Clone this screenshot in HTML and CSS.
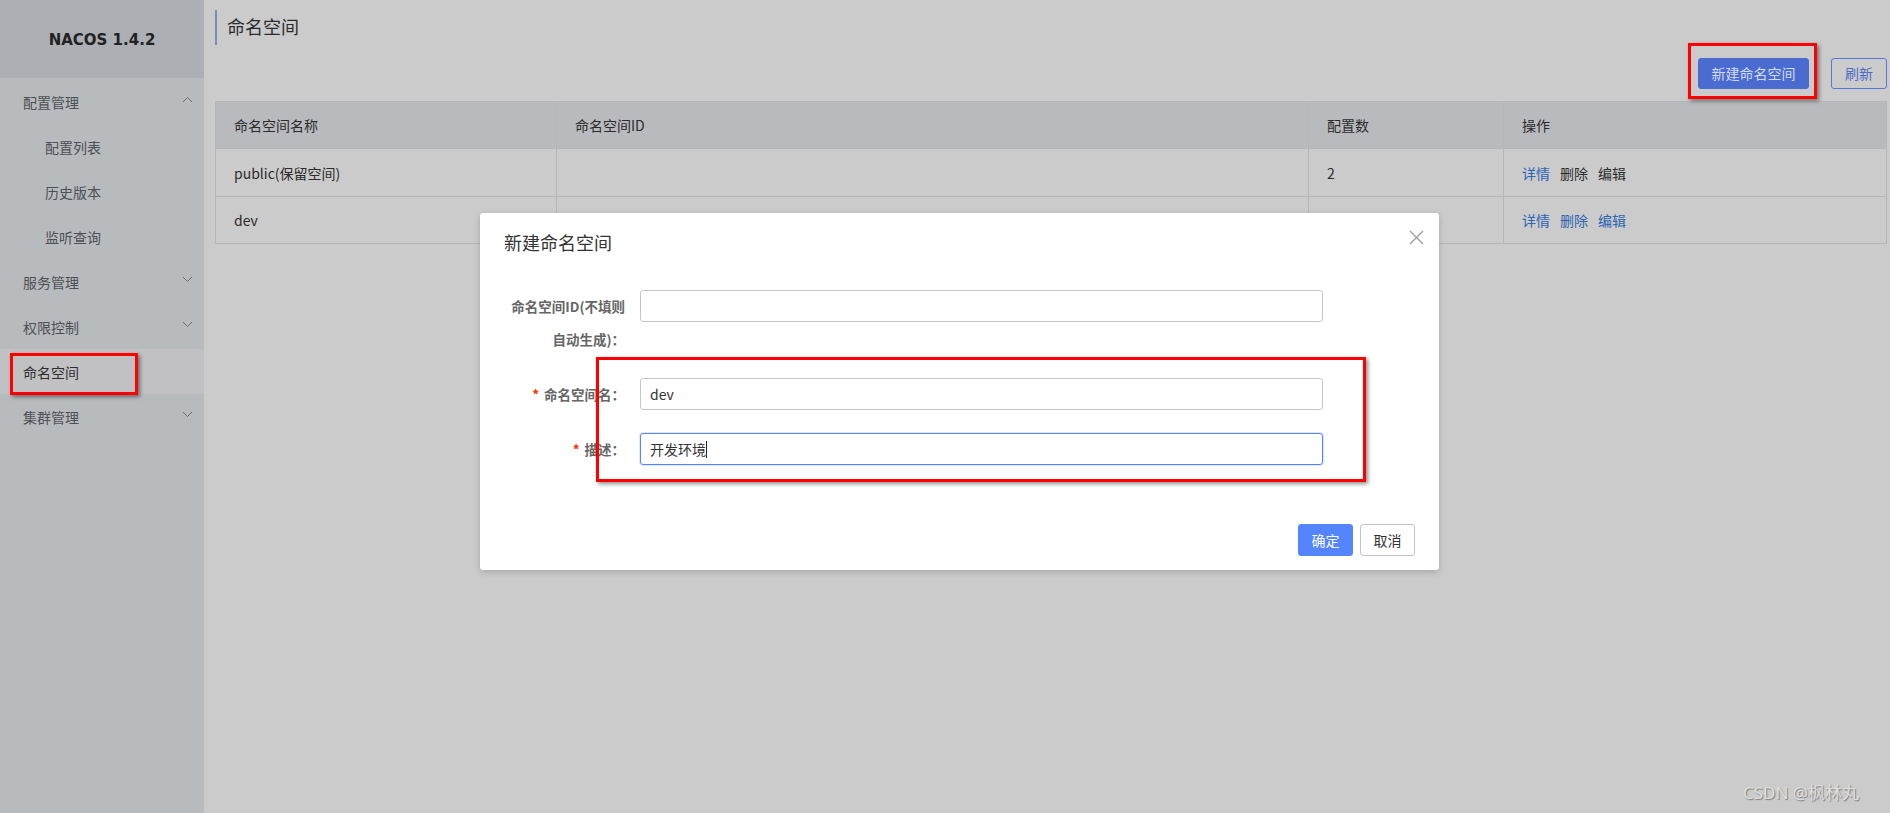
FILE: index.html
```html
<!DOCTYPE html>
<html lang="zh-CN">
<head>
<meta charset="utf-8">
<title>命名空间 - NACOS</title>
<link rel="stylesheet" href="styles.css">
</head>
<body>
<div class="app">
  <aside class="sidebar">
    <div class="brand">NACOS 1.4.2</div>
    <ul class="menu">
      <li class="item group">配置管理
        <svg class="chev" width="11" height="7" viewBox="0 0 11 7"><polyline points="1,6 5.5,1.5 10,6" fill="none" stroke="#6a6d71" stroke-width="1"/></svg>
      </li>
      <li class="item sub">配置列表</li>
      <li class="item sub">历史版本</li>
      <li class="item sub">监听查询</li>
      <li class="item group">服务管理
        <svg class="chev" width="11" height="7" viewBox="0 0 11 7"><polyline points="1,1 5.5,5.5 10,1" fill="none" stroke="#6a6d71" stroke-width="1"/></svg>
      </li>
      <li class="item group">权限控制
        <svg class="chev" width="11" height="7" viewBox="0 0 11 7"><polyline points="1,1 5.5,5.5 10,1" fill="none" stroke="#6a6d71" stroke-width="1"/></svg>
      </li>
      <li class="item active">命名空间</li>
      <li class="item group">集群管理
        <svg class="chev" width="11" height="7" viewBox="0 0 11 7"><polyline points="1,1 5.5,5.5 10,1" fill="none" stroke="#6a6d71" stroke-width="1"/></svg>
      </li>
    </ul>
  </aside>

  <main class="main">
    <h1 class="page-title">命名空间</h1>
    <div class="toolbar">
      <button class="btn btn-primary">新建命名空间</button>
      <button class="btn btn-outline">刷新</button>
    </div>
    <table class="ns-table">
      <colgroup>
        <col class="c1"><col class="c2"><col class="c3"><col class="c4">
      </colgroup>
      <thead>
        <tr><th>命名空间名称</th><th>命名空间ID</th><th>配置数</th><th>操作</th></tr>
      </thead>
      <tbody>
        <tr>
          <td>public(保留空间)</td><td></td><td>2</td>
          <td><span class="link">详情</span><span class="link dis">删除</span><span class="link dis">编辑</span></td>
        </tr>
        <tr>
          <td>dev</td><td></td><td></td>
          <td><span class="link">详情</span><span class="link">删除</span><span class="link">编辑</span></td>
        </tr>
      </tbody>
    </table>
  </main>
</div>

<div class="dialog">
  <div class="dialog-header">新建命名空间</div>
  <svg class="dialog-close" width="15" height="15" viewBox="0 0 15 15"><path d="M1 1 L14 14 M14 1 L1 14" stroke="#9a9a9a" stroke-width="1.3" fill="none"/></svg>
  <div class="dialog-body">
    <div class="form-row">
      <div class="label">命名空间ID(不填则<br>自动生成)：</div>
      <div class="input"></div>
    </div>
    <div class="form-row">
      <div class="label"><span class="req">*</span>命名空间名：</div>
      <div class="input">dev</div>
    </div>
    <div class="form-row">
      <div class="label"><span class="req">*</span>描述：</div>
      <div class="input focused">开发环境<span class="caret"></span></div>
    </div>
  </div>
  <div class="dialog-footer">
    <button class="dbtn dbtn-primary">确定</button>
    <button class="dbtn dbtn-normal">取消</button>
  </div>
</div>

<div class="mark mark-side"></div>
<div class="mark mark-top"></div>
<div class="mark mark-form"></div>

<div class="watermark">CSDN @枫林丸</div>
</body>
</html>
```

FILE: styles.css
```css
* { box-sizing: border-box; }

html, body {
  margin: 0;
  padding: 0;
}

body {
  width: 1890px;
  height: 813px;
  overflow: hidden;
  background: #cbcbcb;
  font-family: "Noto Sans CJK SC", "Noto Sans", sans-serif;
  font-size: 14px;
  color: #2b2b2b;
  position: relative;
}

.app {
  display: flex;
  height: 813px;
}

/* Sidebar */
.sidebar {
  width: 204px;
  flex: none;
  background: #b8bbbe;
  display: flex;
  flex-direction: column;
}

.brand {
  height: 78px;
  background: #acafb3;
  display: flex;
  align-items: center;
  justify-content: center;
  font-family: "DejaVu Sans", sans-serif;
  font-weight: bold;
  font-size: 15px;
  color: #222;
  padding-top: 2px;
}

.menu {
  list-style: none;
  margin: 0;
  padding: 1px 0 0;
}

.item {
  height: 45px;
  display: flex;
  align-items: center;
  justify-content: space-between;
  padding: 0 11px 0 23px;
  color: #4d5054;
  font-size: 14px;
}

.item.sub {
  padding-left: 45px;
}

.item.active {
  background: #c1c1c4;
  color: #2e2e2e;
}

.chev {
  display: block;
  margin-top: -4px;
}

/* Main */
.main {
  flex: 1;
  padding: 10px 3px 0 11px;
  min-width: 0;
}

.page-title {
  margin: 0;
  height: 35px;
  line-height: 33px;
  border-left: 2px solid #7390b5;
  padding-left: 10px;
  font-size: 18px;
  font-weight: normal;
  color: #2b2b2b;
}

.toolbar {
  display: flex;
  justify-content: flex-end;
  gap: 22px;
  margin-top: 13px;
  margin-bottom: 12px;
}

.btn {
  height: 31px;
  font-family: inherit;
  font-size: 14px;
  border-radius: 3px;
  padding: 0;
  line-height: 29px;
  white-space: nowrap;
  text-align: center;
  cursor: pointer;
}

.btn-primary {
  background: #4a6bcf;
  border: 1px solid #4a6bcf;
  color: #d3dbf2;
  width: 111px;
}

.btn-outline {
  background: transparent;
  border: 1px solid #5579d6;
  color: #4c6cc8;
  width: 56px;
}

/* Table */
.ns-table {
  width: 1671px;
  border-collapse: collapse;
  table-layout: fixed;
  border: 1px solid #b6b6b9;
}

.ns-table col.c1 { width: 341px; }
.ns-table col.c2 { width: 752px; }
.ns-table col.c3 { width: 195px; }
.ns-table col.c4 { width: 383px; }

.ns-table th,
.ns-table td {
  height: 47px;
  padding: 0 18px;
  text-align: left;
  font-weight: normal;
  font-size: 14px;
  border: 1px solid #b6b6b9;
  color: #2b2b2b;
  white-space: nowrap;
}

.ns-table th {
  background: #b9babd;
}

.ns-table tbody tr:first-child td { height: 48px; }

.link {
  color: #2d64b3;
  margin-right: 10px;
}

.link.dis {
  color: #2b2b2b;
}

/* Dialog */
.dialog {
  position: absolute;
  left: 480px;
  top: 213px;
  width: 959px;
  height: 357px;
  background: #fff;
  border-radius: 3px;
  box-shadow: 0 2px 6px rgba(0, 0, 0, 0.18);
  display: flex;
  flex-direction: column;
}

.dialog-header {
  padding: 16px 24px 0;
  font-size: 18px;
  line-height: 26px;
  color: #333;
}

.dialog-close {
  position: absolute;
  right: 15px;
  top: 17px;
}

.dialog-body {
  padding: 35px 24px 0;
}

.form-row {
  display: flex;
  align-items: flex-start;
  margin-bottom: 22px;
}

.label {
  width: 136px;
  flex: none;
  padding-right: 15px;
  text-align: right;
  line-height: 33px;
  font-size: 13.5px;
  font-weight: bold;
  color: #666;
  white-space: nowrap;
}

.req {
  color: #ff3000;
  margin-right: 5px;
  font-weight: bold;
}

.input {
  width: 683px;
  height: 32px;
  border: 1px solid #c4c6cf;
  border-radius: 3px;
  padding: 0 9px;
  line-height: 30px;
  font-size: 14px;
  color: #333;
}

.input.focused {
  border-color: #5584ff;
  box-shadow: 0 0 0 1px rgba(85, 132, 255, 0.18);
}

.caret {
  display: inline-block;
  width: 1px;
  height: 17px;
  background: #222;
  vertical-align: -3px;
}

.dialog-footer {
  margin-top: auto;
  padding: 0 24px 14px;
  display: flex;
  justify-content: flex-end;
  gap: 7px;
}

.dbtn {
  width: 55px;
  height: 32px;
  border-radius: 3px;
  font-family: inherit;
  font-size: 14px;
  padding: 0;
  cursor: pointer;
}

.dbtn-primary {
  background: #5584ff;
  border: 1px solid #5584ff;
  color: #fff;
}

.dbtn-normal {
  background: #fff;
  border: 1px solid #c4c6cf;
  color: #333;
}

/* Red annotation marks */
.mark {
  position: absolute;
  border: 3px solid #ff0000;
  box-shadow: 2px 2px 4px rgba(0, 0, 0, 0.45);
}

.mark-side {
  left: 10px;
  top: 353px;
  width: 128px;
  height: 42px;
}

.mark-top {
  left: 1688px;
  top: 43px;
  width: 129px;
  height: 56px;
}

.mark-form {
  left: 596px;
  top: 357px;
  width: 770px;
  height: 125px;
}

/* Watermark */
.watermark {
  position: absolute;
  left: 1743px;
  top: 781px;
  font-family: "Noto Sans", "Noto Sans CJK SC", sans-serif;
  font-size: 17px;
  line-height: 24px;
  color: #dedede;
  text-shadow: 1px 1px 1px #7e7e7e;
}
```
